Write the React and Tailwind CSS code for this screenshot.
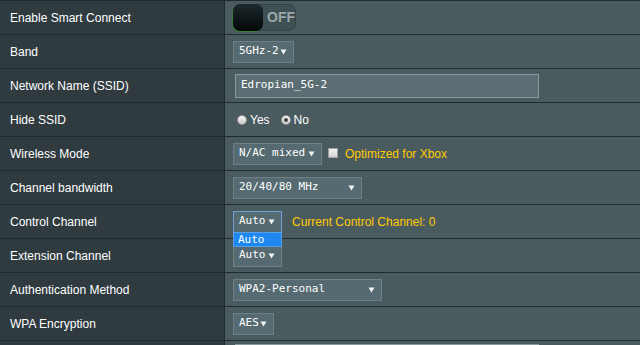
import React from 'react'

const Arrow = () => (
  <svg width="7" height="6" viewBox="0 0 7 6" className="shrink-0">
    <path d="M0.5 0.5 L6.5 0.5 L3.5 5.5 Z" fill="#f2f4f4" />
  </svg>
)

function Select({ value, width, focus = false }) {
  return (
    <div
      className={
        'h-[22px] flex items-center justify-between pl-[5px] pr-[6px] border bg-[#566b71] text-white font-["DejaVu_Sans_Mono",monospace] text-[11px] ' +
        (focus ? 'border-[#6f9fd8]' : 'border-[#6d8085]')
      }
      style={{ width }}
    >
      <span>{value}</span>
      <Arrow />
    </div>
  )
}

function Row({ label, children, last = false }) {
  return (
    <div className={'flex h-[34px] border-t border-[#222a2d] shadow-[inset_0_1px_0_#3a474b]' + (last ? ' h-[40px]' : '')}>
      <div className="w-[225px] shrink-0 bg-[#2f3b3f] border-r border-[#232b2e] flex items-center pl-[10px] text-white text-[12px] font-['Liberation_Sans',Arial,sans-serif]">
        {label}
      </div>
      <div className="flex-1 bg-[#4a5b60] flex items-center pl-[8px] gap-[6px] relative">
        {children}
      </div>
    </div>
  )
}

const Radio = ({ checked }) => (
  <span className="w-[10px] h-[10px] rounded-full bg-gradient-to-b from-[#f4f4f4] to-[#cfcfcf] border border-[#9a9a9a] flex items-center justify-center">
    {checked && <span className="w-[4px] h-[4px] rounded-full bg-[#444]" />}
  </span>
)

export default function App() {
  return (
    <div className="w-[640px] h-[345px] overflow-hidden bg-[#4a5b60] font-['Liberation_Sans',Arial,sans-serif]">
      <Row label="Enable Smart Connect">
        <div className="w-[63px] h-[27px] rounded-[7px] bg-[#3f5055] border border-[#354348] flex items-center">
          <div className="w-[32px] h-[27px] -ml-px rounded-[7px] bg-gradient-to-b from-[#1d2a2e] to-[#050808] shadow-[-1px_1px_0_#3d7a3d]" />
          <span className="ml-[4px] text-[14px] font-bold text-[#9aa6a8]">OFF</span>
        </div>
      </Row>
      <Row label="Band">
        <Select value="5GHz-2" width={61} />
      </Row>
      <Row label="Network Name (SSID)">
        <div className="ml-[2px] w-[304px] h-[24px] border border-[#8a9a9e] bg-[#5a6e74] flex items-center pl-[5px] text-white text-[11px] font-['DejaVu_Sans_Mono',monospace]">
          Edropian_5G-2
        </div>
      </Row>
      <Row label="Hide SSID">
        <div className="flex items-center gap-[3px] ml-[4px] text-white text-[12px]">
          <Radio />
          <span>Yes</span>
          <span className="w-[5px]" />
          <Radio checked />
          <span>No</span>
        </div>
      </Row>
      <Row label="Wireless Mode">
        <Select value="N/AC mixed" width={89} />
        <span className="w-[10px] h-[10px] bg-gradient-to-b from-[#f2f2f2] to-[#d4d4d4] border border-[#a0a0a0] -mt-[2px]" />
        <span className="text-[#ffcc00] text-[12px] ml-[1px]">Optimized for Xbox</span>
      </Row>
      <Row label="Channel bandwidth">
        <Select value="20/40/80 MHz" width={129} />
      </Row>
      <Row label="Control Channel">
        <Select value="Auto" width={49} focus />
        <span className="ml-[4px] text-[#ffcc00] text-[12px]">Current Control Channel: 0</span>
        <div className="absolute left-[8px] top-[27px] z-10 w-[49px] h-[15px] bg-[#1e88f0] border border-[#5aa0e8] text-white text-[11px] font-['DejaVu_Sans_Mono',monospace] pl-[4px] leading-[13px]">
          Auto
        </div>
      </Row>
      <Row label="Extension Channel">
        <Select value="Auto" width={49} />
      </Row>
      <Row label="Authentication Method">
        <Select value="WPA2-Personal" width={149} />
      </Row>
      <Row label="WPA Encryption">
        <Select value="AES" width={41} />
      </Row>
      <div className="flex h-[40px] border-t border-[#222a2d] shadow-[inset_0_1px_0_#3a474b]">
        <div className="w-[225px] shrink-0 bg-[#2f3b3f] border-r border-[#232b2e]" />
        <div className="flex-1 bg-[#4a5b60] pl-[10px] pt-[3px]">
          <div className="w-[304px] h-[24px] border border-[#8a9a9e] bg-[#5a6e74]" />
        </div>
      </div>
    </div>
  )
}
